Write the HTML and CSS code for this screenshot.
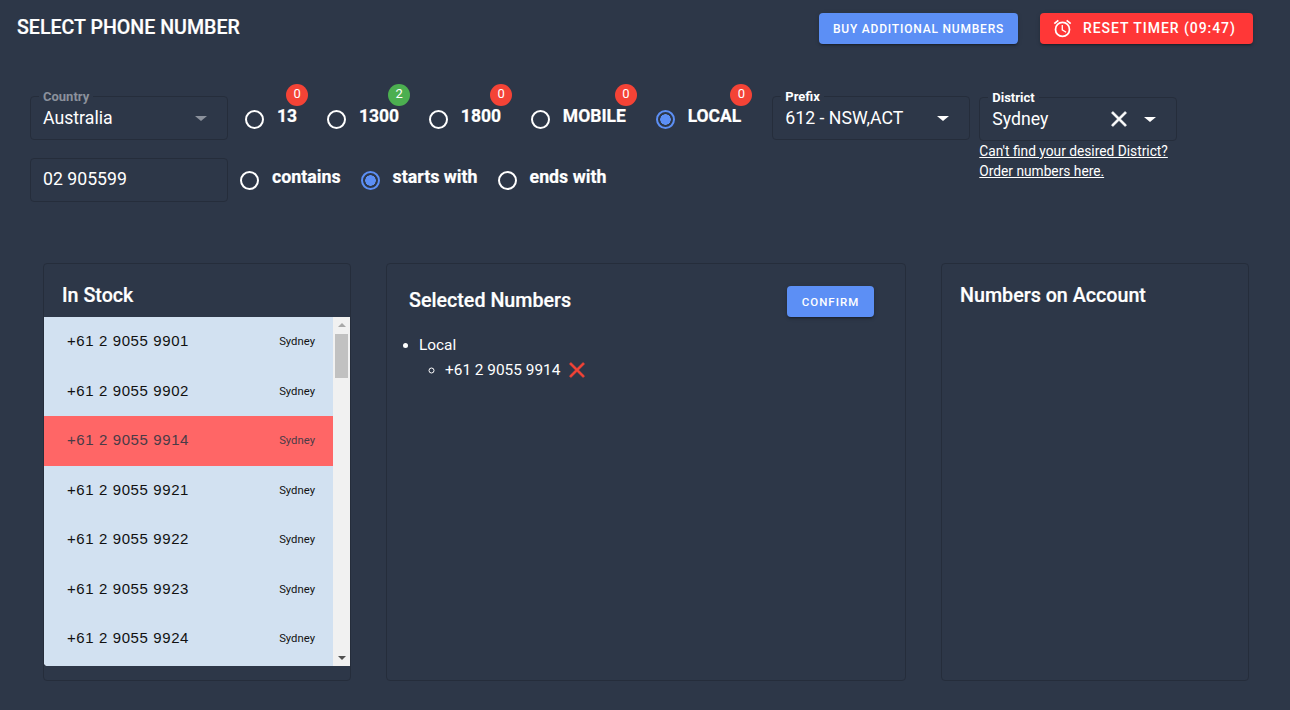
FILE: index.html
```html
<!DOCTYPE html>
<html lang="en">
<head>
<meta charset="utf-8">
<title>Select Phone Number</title>
<link rel="stylesheet" href="styles.css">
</head>
<body>
<header class="topbar">
  <h1 class="title">SELECT PHONE NUMBER</h1>
  <div class="actions">
    <button class="btn btn-blue btn-buy">BUY ADDITIONAL NUMBERS</button>
    <button class="btn btn-red">
      <svg class="alarm" viewBox="0 0 24 24"><path d="M12,20A7,7 0 0,1 5,13A7,7 0 0,1 12,6A7,7 0 0,1 19,13A7,7 0 0,1 12,20M12,4A9,9 0 0,0 3,13A9,9 0 0,0 12,22A9,9 0 0,0 21,13A9,9 0 0,0 12,4M12.5,8H11V14L15.75,16.85L16.5,15.62L12.5,13.25V8M7.88,3.39L6.6,1.86L2,5.71L3.29,7.24L7.88,3.39M22,5.72L17.4,1.86L16.11,3.39L20.71,7.25L22,5.72Z"/></svg>
      RESET TIMER (09:47)
    </button>
  </div>
</header>

<section class="filters">
  <div class="filters-main">
    <div class="filter-row">
      <div class="field">
        <span class="field-label muted">Country</span>
        <span class="field-value">Australia</span>
        <span class="caret caret-muted"></span>
      </div>
      <div class="radios radios-type">
        <label class="radio"><span class="dot"></span><span class="radio-text">13</span><span class="badge">0</span></label>
        <label class="radio"><span class="dot"></span><span class="radio-text">1300</span><span class="badge badge-green">2</span></label>
        <label class="radio"><span class="dot"></span><span class="radio-text">1800</span><span class="badge">0</span></label>
        <label class="radio"><span class="dot"></span><span class="radio-text">MOBILE</span><span class="badge">0</span></label>
        <label class="radio"><span class="dot dot-on"></span><span class="radio-text">LOCAL</span><span class="badge">0</span></label>
      </div>
      <div class="field">
        <span class="field-label">Prefix</span>
        <span class="field-value">612 - NSW,ACT</span>
        <span class="caret"></span>
      </div>
    </div>
    <div class="filter-row">
      <div class="field field-search">
        <span class="field-value">02 905599</span>
      </div>
      <div class="radios radios-match">
        <label class="radio"><span class="dot"></span><span class="radio-text lower">contains</span></label>
        <label class="radio"><span class="dot dot-on"></span><span class="radio-text lower">starts with</span></label>
        <label class="radio"><span class="dot"></span><span class="radio-text lower">ends with</span></label>
      </div>
    </div>
  </div>
  <div class="district">
    <div class="field">
      <span class="field-label">District</span>
      <span class="field-value">Sydney</span>
      <svg class="clear" viewBox="0 0 24 24"><path d="M19,6.41L17.59,5L12,10.59L6.41,5L5,6.41L10.59,12L5,17.59L6.41,19L12,13.41L17.59,19L19,17.59L13.41,12L19,6.41Z"/></svg>
      <span class="caret"></span>
    </div>
    <a class="order-link" href="#">Can't find your desired District?<br>Order numbers here.</a>
  </div>
</section>

<main class="panels">
  <section class="panel panel-stock">
    <h2 class="panel-title">In Stock</h2>
    <div class="stock">
      <ul class="stock-list">
        <li class="stock-row"><span class="num">+61 2 9055 9901</span><span class="place">Sydney</span></li>
        <li class="stock-row"><span class="num">+61 2 9055 9902</span><span class="place">Sydney</span></li>
        <li class="stock-row stock-row-on"><span class="num">+61 2 9055 9914</span><span class="place">Sydney</span></li>
        <li class="stock-row"><span class="num">+61 2 9055 9921</span><span class="place">Sydney</span></li>
        <li class="stock-row"><span class="num">+61 2 9055 9922</span><span class="place">Sydney</span></li>
        <li class="stock-row"><span class="num">+61 2 9055 9923</span><span class="place">Sydney</span></li>
        <li class="stock-row"><span class="num">+61 2 9055 9924</span><span class="place">Sydney</span></li>
      </ul>
      <div class="scrollbar">
        <span class="arrow-up"></span>
        <span class="thumb"></span>
        <span class="arrow-down"></span>
      </div>
    </div>
  </section>

  <section class="panel panel-selected">
    <div class="selected-head">
      <h2 class="panel-title title-selected">Selected Numbers</h2>
      <button class="btn btn-blue btn-confirm">CONFIRM</button>
    </div>
    <ul class="tree">
      <li>Local
        <ul class="tree-sub">
          <li><span class="tree-num">+61 2 9055 9914</span><svg class="remove" viewBox="0 0 24 24"><path d="M19,6.41L17.59,5L12,10.59L6.41,5L5,6.41L10.59,12L5,17.59L6.41,19L12,13.41L17.59,19L19,17.59L13.41,12L19,6.41Z"/></svg></li>
        </ul>
      </li>
    </ul>
  </section>

  <section class="panel panel-account">
    <h2 class="panel-title">Numbers on Account</h2>
  </section>
</main>
</body>
</html>
```
FILE: styles.css
```css
* { box-sizing: border-box; }
html, body { margin: 0; height: 710px; overflow: hidden; }
body {
  background: #2d3748;
  color: #fff;
  font-family: Roboto, "Liberation Sans", sans-serif;
}
.topbar {
  display: flex;
  justify-content: space-between;
  align-items: center;
  padding: 13px 37px 0 17px;
}
.title { margin: 0 0 2px; font-size: 19.6px; font-weight: 500; line-height: 29px; -webkit-text-stroke: .2px #fff; }
.actions { display: flex; gap: 22px; }
.btn {
  display: inline-flex;
  align-items: center;
  justify-content: center;
  height: 31px;
  border: 0;
  border-radius: 4px;
  color: #fff;
  font-family: inherit;
  font-weight: 500;
  box-shadow: 0 3px 1px -2px rgba(0,0,0,.2), 0 2px 2px 0 rgba(0,0,0,.14), 0 1px 5px 0 rgba(0,0,0,.12);
}
.btn-blue { background: #5c8ff5; font-size: 12px; letter-spacing: .8px; padding-bottom: 1px; }
.btn-buy { width: 199px; }
.btn-confirm { width: 87px; font-size: 11.5px; letter-spacing: 1px; }
.btn-red {
  justify-content: flex-start;
  width: 213px;
  padding: 0 0 1px 13px;
  background: #ff3737;
  font-size: 14px;
  letter-spacing: .95px;
  gap: 10px;
}
.alarm { width: 21px; height: 21px; margin-left: -1px; fill: #fff; }

.filters { display: flex; gap: 9px; margin-top: 52px; padding-left: 30px; }
.filters-main { display: flex; flex-direction: column; gap: 18px; }
.filter-row { display: flex; }
.field {
  position: relative;
  display: flex;
  align-items: center;
  width: 198px;
  height: 44px;
  padding: 0 12px;
  border: 1px solid #252d3b;
  border-radius: 4px;
}
.field-search { padding-bottom: 2px; }
.field-label {
  position: absolute;
  top: -7px;
  left: 8px;
  padding: 0 4px;
  background: #2d3748;
  font-size: 13px;
  font-weight: 700;
  line-height: 14px;
}
.field-label.muted { color: #8b919c; }
.field-value { flex: 1; font-size: 17.7px; line-height: 24px; }
.caret {
  width: 0;
  height: 0;
  margin: 0 8px 0 0;
  border-left: 6px solid transparent;
  border-right: 6px solid transparent;
  border-top: 5px solid #fff;
}
.caret-muted { border-top-color: #8b919c; }
.radios { display: flex; }
.radios-type { margin: 0 31px 0 17px; gap: 29.8px; }
.radios-match { margin-left: 12px; gap: 20px; }
.radio { position: relative; display: flex; align-items: center; gap: 13px; }
.dot {
  width: 19px;
  height: 19px;
  margin-top: 2px;
  border: 2px solid #fff;
  border-radius: 50%;
}
.dot-on {
  border-color: #5c8ff5;
  background: radial-gradient(circle, #5c8ff5 0 5px, transparent 5.5px);
}
.radios-match .dot { margin-top: 0; }
.radio-text {
  margin-bottom: 5px;
  font-size: 17.5px;
  font-weight: 700;
  line-height: 24px;
  -webkit-text-stroke: .2px #fff;
}
.lower { margin-bottom: 6px; font-size: 17.8px; }
.badge {
  position: absolute;
  top: -12px;
  right: -11px;
  width: 22px;
  height: 22px;
  border-radius: 50%;
  background: #f44336;
  font-size: 13px;
  font-weight: 400;
  line-height: 20px;
  text-align: center;
}
.badge-green { background: #4caf50; }

.district { display: flex; flex-direction: column; padding-top: 1px; }
.clear { width: 26px; height: 26px; fill: #fff; stroke: #fff; stroke-width: .5px; margin-right: 12px; }
.order-link {
  color: #fff;
  font-size: 13.75px;
  line-height: 20px;
  text-decoration: underline;
  white-space: nowrap;
}

.panels { display: flex; gap: 35px; margin-top: 61px; padding-left: 43px; }
.panel {
  height: 418px;
  border: 1px solid #252d3b;
  border-radius: 4px;
}
.panel-stock, .panel-account { width: 308px; }
.panel-selected { width: 520px; }
.panel-title { margin: 0; font-size: 19.7px; font-weight: 500; line-height: 26px; -webkit-text-stroke: .2px #fff; }
.panel-stock .panel-title { padding: 19px 18px 8px; }
.panel-account .panel-title { padding: 19px 18px 17px 18px; }
.title-selected { margin-bottom: 2px; }
.selected-head {
  display: flex;
  justify-content: space-between;
  align-items: center;
  padding: 22px 31px 0 22px;
}
.stock { display: flex; width: 306px; height: 349px; background: #f1f1f1; border-radius: 0 0 0 4px; overflow: hidden; }
.stock-list { flex: 1; margin: 0; padding: 0; list-style: none; overflow: hidden; background: #d2e1f1; }
.stock-row {
  display: flex;
  align-items: center;
  justify-content: space-between;
  height: 49.5px;
  padding: 0 18px 2px 23px;
  background: #d2e1f1;
  color: #111;
}
.stock-row-on { background: #ff6666; color: #4a3b46; }
.num { font-family: "Liberation Sans", Arial, sans-serif; font-size: 15px; letter-spacing: .6px; }
.place { margin-top: 2px; font-size: 11.3px; }
.scrollbar {
  display: flex;
  flex-direction: column;
  align-items: center;
  width: 17px;
  padding: 6px 2px;
}
.thumb { width: 13px; height: 44px; margin-top: 7px; background: #c1c1c1; }
.arrow-up, .arrow-down {
  width: 0;
  height: 0;
  border-left: 4px solid transparent;
  border-right: 4px solid transparent;
}
.arrow-up { border-bottom: 4px solid #a8a8a8; }
.arrow-down { margin-top: auto; border-top: 4px solid #505050; }

.tree { margin: 16px 0 0; padding-left: 32px; font-size: 15.4px; line-height: 25px; }
.tree-sub { margin: -1px 0 0; padding-left: 26px; list-style: circle; }
.remove { width: 26px; height: 26px; margin-left: 4px; fill: #f44336; stroke: #f44336; stroke-width: .5px; vertical-align: -8px; }
```
